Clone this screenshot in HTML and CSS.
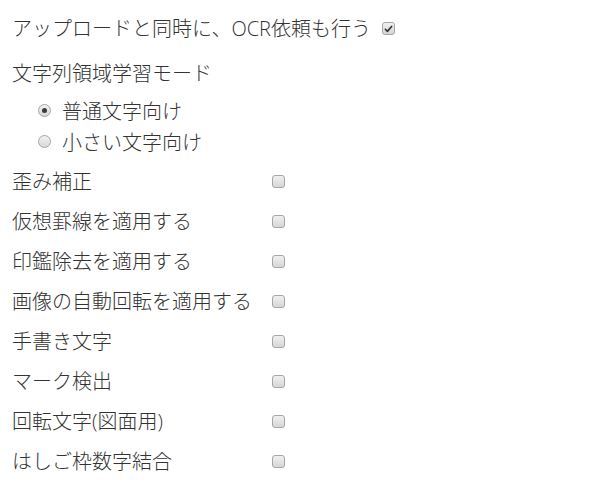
FILE: index.html
```html
<!DOCTYPE html>
<html lang="ja">
<head>
<meta charset="utf-8">
<link rel="stylesheet" href="styles.css">
</head>
<body>
<div class="page">
  <div class="upload">
    <span>アップロードと同時に、OCR依頼も行う</span>
    <span class="cb checked"><svg viewBox="0 0 12 12" width="12" height="12"><path d="M2.6 6.3 L4.8 8.6 L9.4 3.2" fill="none" stroke="#333" stroke-width="1.8" stroke-linecap="round" stroke-linejoin="round"/></svg></span>
  </div>
  <div class="mode-title">文字列領域学習モード</div>
  <div class="radios">
    <div class="radio-row"><span class="radio checked"></span><span>普通文字向け</span></div>
    <div class="radio-row"><span class="radio"></span><span>小さい文字向け</span></div>
  </div>
  <div class="options">
    <div class="opt-label">歪み補正</div><div class="opt-box"><span class="cb"></span></div>
    <div class="opt-label">仮想罫線を適用する</div><div class="opt-box"><span class="cb"></span></div>
    <div class="opt-label">印鑑除去を適用する</div><div class="opt-box"><span class="cb"></span></div>
    <div class="opt-label">画像の自動回転を適用する</div><div class="opt-box"><span class="cb"></span></div>
    <div class="opt-label">手書き文字</div><div class="opt-box"><span class="cb"></span></div>
    <div class="opt-label">マーク検出</div><div class="opt-box"><span class="cb"></span></div>
    <div class="opt-label">回転文字(図面用)</div><div class="opt-box"><span class="cb"></span></div>
    <div class="opt-label">はしご枠数字結合</div><div class="opt-box"><span class="cb"></span></div>
  </div>
</div>
</body>
</html>
```

FILE: styles.css
```css
html, body {
  margin: 0;
  padding: 0;
  background: #ffffff;
}
body {
  font-family: "Open Sans", "Noto Sans CJK JP", sans-serif;
  font-size: 20px;
  font-weight: 300;
  color: #333333;
}
.page {
  padding: 14px 0 0 12px;
}
.upload {
  display: flex;
  align-items: center;
  height: 30px;
  line-height: 30px;
}
.upload .cb {
  margin-left: 11px;
  margin-top: -1px;
}
.mode-title {
  margin-top: 15px;
  height: 30px;
  line-height: 30px;
}
.radios {
  margin-top: 7px;
  padding-left: 26px;
}
.radio-row {
  display: flex;
  align-items: center;
  height: 31px;
  line-height: 31px;
  gap: 11px;
}
.radio {
  box-sizing: border-box;
  width: 13px;
  height: 13px;
  border-radius: 50%;
  border: 1px solid #a4a4a4;
  background: linear-gradient(#f2f2f2, #d8d8d8);
  position: relative;
  margin-top: -3px;
}
.radio.checked::after {
  content: "";
  position: absolute;
  left: 3px;
  top: 3px;
  width: 5px;
  height: 5px;
  border-radius: 50%;
  background: #3a3a3a;
}
.options {
  margin-top: 4px;
  display: grid;
  grid-template-columns: 260px 13px;
  grid-auto-rows: 40px;
  align-items: center;
}
.opt-label {
  line-height: 40px;
}
.opt-box {
  display: flex;
  align-items: center;
  margin-top: -2px;
}
.cb {
  box-sizing: border-box;
  display: inline-flex;
  align-items: center;
  justify-content: center;
  width: 13px;
  height: 13px;
  border: 1px solid #a6a6a6;
  border-radius: 3px;
  background: linear-gradient(#f0f0f0, #d6d6d6);
}
.cb svg {
  display: block;
}
```
